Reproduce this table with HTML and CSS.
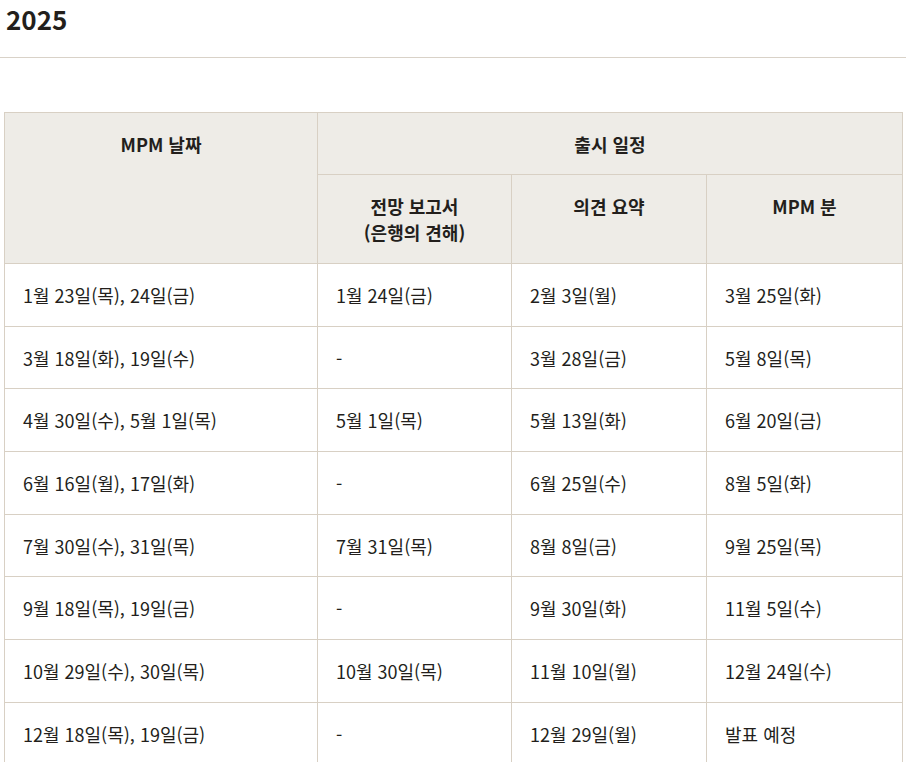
FILE: index.html
```html
<!DOCTYPE html>
<html lang="ko">
<head>
<meta charset="utf-8">
<link rel="stylesheet" href="styles.css">
</head>
<body>
<div class="page">
  <div class="title-bar"><h2 class="title">2025</h2></div>
  <div class="table-wrap">
    <table class="schedule">
      <colgroup>
        <col class="c1"><col class="c2"><col class="c3"><col class="c4">
      </colgroup>
      <thead>
        <tr class="head-top">
          <th rowspan="2">MPM 날짜</th>
          <th colspan="3">출시 일정</th>
        </tr>
        <tr class="head-sub">
          <th>전망 보고서<br>(은행의 견해)</th>
          <th>의견 요약</th>
          <th>MPM 분</th>
        </tr>
      </thead>
      <tbody>
        <tr><td>1월 23일(목), 24일(금)</td><td>1월 24일(금)</td><td>2월 3일(월)</td><td>3월 25일(화)</td></tr>
        <tr><td>3월 18일(화), 19일(수)</td><td>-</td><td>3월 28일(금)</td><td>5월 8일(목)</td></tr>
        <tr><td>4월 30일(수), 5월 1일(목)</td><td>5월 1일(목)</td><td>5월 13일(화)</td><td>6월 20일(금)</td></tr>
        <tr><td>6월 16일(월), 17일(화)</td><td>-</td><td>6월 25일(수)</td><td>8월 5일(화)</td></tr>
        <tr><td>7월 30일(수), 31일(목)</td><td>7월 31일(목)</td><td>8월 8일(금)</td><td>9월 25일(목)</td></tr>
        <tr><td>9월 18일(목), 19일(금)</td><td>-</td><td>9월 30일(화)</td><td>11월 5일(수)</td></tr>
        <tr><td>10월 29일(수), 30일(목)</td><td>10월 30일(목)</td><td>11월 10일(월)</td><td>12월 24일(수)</td></tr>
        <tr><td>12월 18일(목), 19일(금)</td><td>-</td><td>12월 29일(월)</td><td>발표 예정</td></tr>
      </tbody>
    </table>
  </div>
</div>
</body>
</html>
```
FILE: styles.css
```css
html, body {
  margin: 0;
  padding: 0;
  background: #ffffff;
}
body {
  font-family: "Noto Sans CJK KR", "Noto Sans", sans-serif;
  color: #231f1c;
}
.title-bar {
  height: 58px;
  border-bottom: 1px solid #d9d2c8;
  box-sizing: border-box;
  padding: 2px 0 0 6px;
}
.title {
  margin: 0;
  font-size: 26px;
  font-weight: 700;
  line-height: 34px;
}
.table-wrap {
  padding: 54px 4px 0 4px;
}
.schedule {
  width: 898px;
  border-collapse: collapse;
  table-layout: fixed;
}
.c1 { width: 313px; }
.c2 { width: 194px; }
.c3 { width: 195px; }
.c4 { width: 196px; }
.schedule th,
.schedule td {
  border: 1px solid #d8d0c4;
  font-size: 18px;
  line-height: 26px;
  padding: 17.85px 18px;
}
.schedule th {
  background: #eeece7;
  font-weight: 700;
  text-align: center;
  vertical-align: top;
}
.head-top th {
  padding-top: 17.5px;
  padding-bottom: 17.5px;
}
.head-sub th {
  padding-top: 18px;
  padding-bottom: 18px;
}
.schedule td {
  text-align: left;
  vertical-align: middle;
  font-weight: 400;
}
```
